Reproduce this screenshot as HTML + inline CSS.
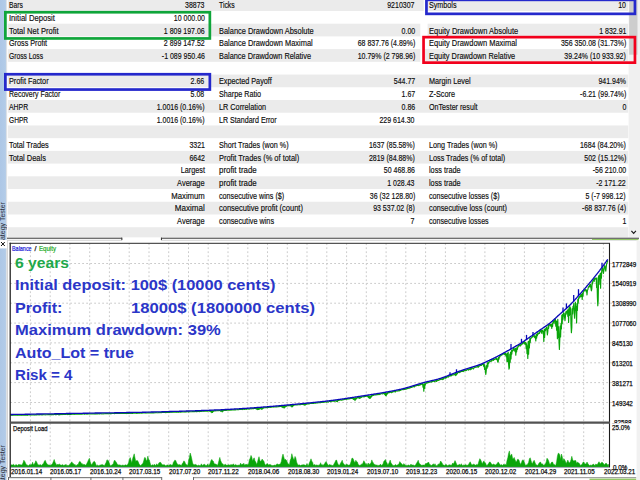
<!DOCTYPE html>
<html><head><meta charset="utf-8"><title>Strategy Tester</title>
<style>
html,body{margin:0;padding:0;background:#fff;}
body{width:640px;height:480px;overflow:hidden;position:relative;font-family:"Liberation Sans",sans-serif;}
#root{position:absolute;left:0;top:0;width:640px;height:480px;overflow:hidden;background:#fff;}
.abs{position:absolute;}
.band{position:absolute;background:#ebebeb;height:12.72px;}
.t{position:absolute;font-size:9.9px;line-height:12px;color:#0c0c0c;-webkit-text-stroke:0.18px #111;white-space:nowrap;transform-origin:0 50%;transform:scaleX(0.755);}
.r{text-align:right;transform-origin:100% 50%;transform:scaleX(0.708);}
.rl{transform:scaleX(0.755);}
.ov{position:absolute;font-weight:bold;font-size:15.5px;line-height:20px;white-space:pre;transform-origin:0 50%;}
.ax{position:absolute;font-size:7.4px;line-height:9px;color:#000;-webkit-text-stroke:0.25px #111;white-space:nowrap;transform-origin:0 50%;transform:scaleX(0.845);}
.dt{position:absolute;font-size:7.4px;line-height:9px;color:#000;-webkit-text-stroke:0.25px #111;white-space:nowrap;top:466.5px;transform-origin:0 50%;transform:scaleX(0.845);}
</style></head><body><div id="root">

<svg class="abs" style="left:0;top:0;" width="640" height="480" viewBox="0 0 640 480">
<rect x="7.90" y="-1.76" width="620.30" height="12.72" fill="#ebebeb"/>
<rect x="7.90" y="23.68" width="620.30" height="12.72" fill="#ebebeb"/>
<rect x="7.90" y="49.12" width="620.30" height="12.72" fill="#ebebeb"/>
<rect x="7.90" y="74.56" width="620.30" height="12.72" fill="#ebebeb"/>
<rect x="7.90" y="100.00" width="620.30" height="12.72" fill="#ebebeb"/>
<rect x="7.90" y="125.44" width="620.30" height="12.72" fill="#ebebeb"/>
<rect x="7.90" y="150.88" width="620.30" height="12.72" fill="#ebebeb"/>
<rect x="7.90" y="176.32" width="620.30" height="12.72" fill="#ebebeb"/>
<rect x="7.90" y="201.76" width="620.30" height="12.72" fill="#ebebeb"/>
<rect x="7.90" y="227.20" width="620.30" height="10.40" fill="#ebebeb"/>
<rect x="420.30" y="23.00" width="7.30" height="13.60" fill="#fff"/>
<rect x="420.30" y="49.00" width="2.30" height="13.20" fill="#fff"/>
<rect x="423.70" y="0.00" width="1.80" height="11.20" fill="#fff"/>
<rect x="628.60" y="0.00" width="11.40" height="237.60" fill="#f0f0f0"/>
<rect x="629.20" y="0.00" width="8.30" height="54.70" fill="#cdcdcd"/>
<path d="M631.4 230.8 L633.65 233.4 L635.9 230.8" fill="none" stroke="#1a1a1a" stroke-width="1.15"/>
</svg>
<div id="table">
<div class="t" style="left:8.9px;top:-0.77px;transform:scaleX(0.684);">Bars</div>
<div class="t r" style="right:435.4px;top:-0.77px;">38873</div>
<div class="t" style="left:219.0px;top:-0.77px;transform:scaleX(0.692);">Ticks</div>
<div class="t r" style="right:225.2px;top:-0.77px;">9210307</div>
<div class="t" style="left:429.1px;top:-0.77px;transform:scaleX(0.726);">Symbols</div>
<div class="t r" style="right:14.0px;top:-0.77px;">10</div>
<div class="t" style="left:8.9px;top:11.93px;transform:scaleX(0.773);">Initial Deposit</div>
<div class="t r" style="right:435.4px;top:11.93px;">10 000.00</div>
<div class="t" style="left:8.9px;top:24.63px;transform:scaleX(0.766);">Total Net Profit</div>
<div class="t r" style="right:435.4px;top:24.63px;">1 809 197.06</div>
<div class="t" style="left:219.0px;top:24.63px;transform:scaleX(0.753);">Balance Drawdown Absolute</div>
<div class="t r" style="right:225.2px;top:24.63px;">0.00</div>
<div class="t" style="left:429.1px;top:24.63px;transform:scaleX(0.759);">Equity Drawdown Absolute</div>
<div class="t r" style="right:14.0px;top:24.63px;">1 832.91</div>
<div class="t" style="left:8.9px;top:37.33px;transform:scaleX(0.731);">Gross Profit</div>
<div class="t r" style="right:435.4px;top:37.33px;">2 899 147.52</div>
<div class="t" style="left:219.0px;top:37.33px;transform:scaleX(0.752);">Balance Drawdown Maximal</div>
<div class="t r" style="right:225.2px;top:37.33px;">68 837.76 (4.89%)</div>
<div class="t" style="left:429.1px;top:37.33px;transform:scaleX(0.756);">Equity Drawdown Maximal</div>
<div class="t r" style="right:14.0px;top:37.33px;">356 350.08 (31.73%)</div>
<div class="t" style="left:8.9px;top:50.03px;transform:scaleX(0.683);">Gross Loss</div>
<div class="t r" style="right:435.4px;top:50.03px;">-1 089 950.46</div>
<div class="t" style="left:219.0px;top:50.03px;transform:scaleX(0.745);">Balance Drawdown Relative</div>
<div class="t r" style="right:225.2px;top:50.03px;">10.79% (2 798.96)</div>
<div class="t" style="left:429.1px;top:50.03px;transform:scaleX(0.748);">Equity Drawdown Relative</div>
<div class="t r" style="right:14.0px;top:50.03px;">39.24% (10 933.92)</div>
<div class="t" style="left:8.9px;top:75.43px;transform:scaleX(0.736);">Profit Factor</div>
<div class="t r" style="right:435.4px;top:75.43px;">2.66</div>
<div class="t" style="left:219.0px;top:75.43px;transform:scaleX(0.735);">Expected Payoff</div>
<div class="t r" style="right:225.2px;top:75.43px;">544.77</div>
<div class="t" style="left:429.1px;top:75.43px;transform:scaleX(0.737);">Margin Level</div>
<div class="t r" style="right:14.0px;top:75.43px;">941.94%</div>
<div class="t" style="left:8.9px;top:88.13px;transform:scaleX(0.707);">Recovery Factor</div>
<div class="t r" style="right:435.4px;top:88.13px;">5.08</div>
<div class="t" style="left:219.0px;top:88.13px;transform:scaleX(0.729);">Sharpe Ratio</div>
<div class="t r" style="right:225.2px;top:88.13px;">1.67</div>
<div class="t" style="left:429.1px;top:88.13px;transform:scaleX(0.740);">Z-Score</div>
<div class="t r" style="right:14.0px;top:88.13px;">-6.21 (99.74%)</div>
<div class="t" style="left:8.9px;top:100.83px;transform:scaleX(0.696);">AHPR</div>
<div class="t r" style="right:435.4px;top:100.83px;">1.0016 (0.16%)</div>
<div class="t" style="left:219.0px;top:100.83px;transform:scaleX(0.738);">LR Correlation</div>
<div class="t r" style="right:225.2px;top:100.83px;">0.86</div>
<div class="t" style="left:429.1px;top:100.83px;transform:scaleX(0.724);">OnTester result</div>
<div class="t r" style="right:14.0px;top:100.83px;">0</div>
<div class="t" style="left:8.9px;top:113.53px;transform:scaleX(0.669);">GHPR</div>
<div class="t r" style="right:435.4px;top:113.53px;">1.0016 (0.16%)</div>
<div class="t" style="left:219.0px;top:113.53px;transform:scaleX(0.720);">LR Standard Error</div>
<div class="t r" style="right:225.2px;top:113.53px;">229 614.30</div>
<div class="t" style="left:8.9px;top:138.93px;transform:scaleX(0.738);">Total Trades</div>
<div class="t r" style="right:435.4px;top:138.93px;">3321</div>
<div class="t" style="left:219.0px;top:138.93px;transform:scaleX(0.728);">Short Trades (won %)</div>
<div class="t r" style="right:225.2px;top:138.93px;">1637 (85.58%)</div>
<div class="t" style="left:429.1px;top:138.93px;transform:scaleX(0.730);">Long Trades (won %)</div>
<div class="t r" style="right:14.0px;top:138.93px;">1684 (84.20%)</div>
<div class="t" style="left:8.9px;top:151.63px;transform:scaleX(0.755);">Total Deals</div>
<div class="t r" style="right:435.4px;top:151.63px;">6642</div>
<div class="t" style="left:219.0px;top:151.63px;transform:scaleX(0.753);">Profit Trades (% of total)</div>
<div class="t r" style="right:225.2px;top:151.63px;">2819 (84.88%)</div>
<div class="t" style="left:429.1px;top:151.63px;transform:scaleX(0.731);">Loss Trades (% of total)</div>
<div class="t r" style="right:14.0px;top:151.63px;">502 (15.12%)</div>
<div class="t r" style="right:435.1px;top:164.33px;transform:scaleX(0.734);">Largest</div>
<div class="t" style="left:219.0px;top:164.33px;transform:scaleX(0.798);">profit trade</div>
<div class="t r" style="right:225.2px;top:164.33px;">50 468.86</div>
<div class="t" style="left:429.1px;top:164.33px;transform:scaleX(0.740);">loss trade</div>
<div class="t r" style="right:14.0px;top:164.33px;">-56 210.00</div>
<div class="t r" style="right:435.1px;top:177.03px;transform:scaleX(0.751);">Average</div>
<div class="t" style="left:219.0px;top:177.03px;transform:scaleX(0.798);">profit trade</div>
<div class="t r" style="right:225.2px;top:177.03px;">1 028.43</div>
<div class="t" style="left:429.1px;top:177.03px;transform:scaleX(0.740);">loss trade</div>
<div class="t r" style="right:14.0px;top:177.03px;">-2 171.22</div>
<div class="t r" style="right:435.1px;top:189.73px;transform:scaleX(0.783);">Maximum</div>
<div class="t" style="left:219.0px;top:189.73px;transform:scaleX(0.729);">consecutive wins ($)</div>
<div class="t r" style="right:225.2px;top:189.73px;">36 (32 128.80)</div>
<div class="t" style="left:429.1px;top:189.73px;transform:scaleX(0.722);">consecutive losses ($)</div>
<div class="t r" style="right:14.0px;top:189.73px;">5 (-7 998.12)</div>
<div class="t r" style="right:435.1px;top:202.43px;transform:scaleX(0.816);">Maximal</div>
<div class="t" style="left:219.0px;top:202.43px;transform:scaleX(0.761);">consecutive profit (count)</div>
<div class="t r" style="right:225.2px;top:202.43px;">93 537.02 (8)</div>
<div class="t" style="left:429.1px;top:202.43px;transform:scaleX(0.736);">consecutive loss (count)</div>
<div class="t r" style="right:14.0px;top:202.43px;">-68 837.76 (4)</div>
<div class="t r" style="right:435.1px;top:215.13px;transform:scaleX(0.751);">Average</div>
<div class="t" style="left:219.0px;top:215.13px;transform:scaleX(0.737);">consecutive wins</div>
<div class="t r" style="right:225.2px;top:215.13px;">7</div>
<div class="t" style="left:429.1px;top:215.13px;transform:scaleX(0.720);">consecutive losses</div>
<div class="t r" style="right:14.0px;top:215.13px;">1</div>
</div>
<svg class="abs" style="left:0;top:0;" width="640" height="480" viewBox="0 0 640 480">
<defs><linearGradient id="sbg" x1="0" x2="1" y1="0" y2="0"><stop offset="0" stop-color="#adc7e6"/><stop offset="0.8" stop-color="#b2cbe8"/><stop offset="1" stop-color="#bdd0e6"/></linearGradient></defs>
<rect x="0" y="0" width="6.3" height="239.9" fill="url(#sbg)"/>
<rect x="0" y="248.4" width="6.3" height="232" fill="url(#sbg)"/>
<rect x="6.30" y="0.00" width="0.80" height="239.90" fill="#d6dade"/>
<rect x="6.30" y="248.40" width="0.80" height="231.60" fill="#d6dade"/>
<path d="M1.0 242.0 L4.8 246.0 M4.8 242.0 L1.0 246.0" stroke="#111" stroke-width="1.0" fill="none"/>
</svg>
<div class="abs" style="left:0;top:0.0px;width:7px;height:239.8px;overflow:hidden;"><div style="position:absolute;left:0.2px;top:249.2px;width:0;height:0;"><div style="position:absolute;left:0;top:0;transform-origin:0 0;transform:rotate(-90deg);font-size:7px;line-height:6px;height:6px;color:#2a2f3a;white-space:nowrap;">Strategy Tester</div></div></div>
<div class="abs" style="left:0;top:248.4px;width:7px;height:231.6px;overflow:hidden;"><div style="position:absolute;left:0.2px;top:243.3px;width:0;height:0;"><div style="position:absolute;left:0;top:0;transform-origin:0 0;transform:rotate(-90deg);font-size:7px;line-height:6px;height:6px;color:#2a2f3a;white-space:nowrap;">Strategy Tester</div></div></div>
<svg class="abs" style="left:0;top:0;" width="640" height="480" viewBox="0 0 640 480">
<rect x="5.35" y="12.25" width="204.50" height="26.20" fill="none" stroke="#0fa53a" stroke-width="2.70"/>
<rect x="5.35" y="74.25" width="204.50" height="15.30" fill="none" stroke="#2529cc" stroke-width="2.70"/>
<rect x="426.45" y="-0.15" width="208.50" height="14.00" fill="none" stroke="#2529cc" stroke-width="2.70"/>
<rect x="423.55" y="37.15" width="211.40" height="25.50" fill="none" stroke="#f2001c" stroke-width="2.70"/>
<rect x="7.00" y="237.60" width="633.00" height="3.10" fill="#fff"/>
<rect x="7.00" y="237.60" width="115.00" height="1.40" fill="#707070"/>
<rect x="7.00" y="239.80" width="115.00" height="0.80" fill="#c6c6c6"/>
<rect x="161.30" y="237.60" width="477.70" height="1.40" fill="#707070"/>
<rect x="161.30" y="239.80" width="430.70" height="0.80" fill="#c6c6c6"/>
<rect x="121.30" y="237.60" width="1.10" height="2.50" fill="#3a3a3a"/>
<rect x="160.90" y="237.60" width="1.10" height="2.50" fill="#3a3a3a"/>
<rect x="592.00" y="239.00" width="46.50" height="1.20" fill="#93c765"/>
<rect x="592.00" y="240.40" width="44.50" height="0.60" fill="#dcd8e4"/>
</svg>
<svg class="abs" style="left:0;top:0;" width="640" height="480" viewBox="0 0 640 480">
<rect x="636.6" y="240.6" width="3.4" height="240" fill="#f1f1f1"/>
<line x1="30.4" y1="243.3" x2="30.4" y2="467.0" stroke="#cbcbcb" stroke-width="1" stroke-dasharray="1.8,2.2"/>
<line x1="50.2" y1="243.3" x2="50.2" y2="467.0" stroke="#cbcbcb" stroke-width="1" stroke-dasharray="1.8,2.2"/>
<line x1="69.9" y1="243.3" x2="69.9" y2="467.0" stroke="#cbcbcb" stroke-width="1" stroke-dasharray="1.8,2.2"/>
<line x1="89.7" y1="243.3" x2="89.7" y2="467.0" stroke="#cbcbcb" stroke-width="1" stroke-dasharray="1.8,2.2"/>
<line x1="109.4" y1="243.3" x2="109.4" y2="467.0" stroke="#cbcbcb" stroke-width="1" stroke-dasharray="1.8,2.2"/>
<line x1="129.2" y1="243.3" x2="129.2" y2="467.0" stroke="#cbcbcb" stroke-width="1" stroke-dasharray="1.8,2.2"/>
<line x1="149.0" y1="243.3" x2="149.0" y2="467.0" stroke="#cbcbcb" stroke-width="1" stroke-dasharray="1.8,2.2"/>
<line x1="168.7" y1="243.3" x2="168.7" y2="467.0" stroke="#cbcbcb" stroke-width="1" stroke-dasharray="1.8,2.2"/>
<line x1="188.5" y1="243.3" x2="188.5" y2="467.0" stroke="#cbcbcb" stroke-width="1" stroke-dasharray="1.8,2.2"/>
<line x1="208.2" y1="243.3" x2="208.2" y2="467.0" stroke="#cbcbcb" stroke-width="1" stroke-dasharray="1.8,2.2"/>
<line x1="228.0" y1="243.3" x2="228.0" y2="467.0" stroke="#cbcbcb" stroke-width="1" stroke-dasharray="1.8,2.2"/>
<line x1="247.8" y1="243.3" x2="247.8" y2="467.0" stroke="#cbcbcb" stroke-width="1" stroke-dasharray="1.8,2.2"/>
<line x1="267.5" y1="243.3" x2="267.5" y2="467.0" stroke="#cbcbcb" stroke-width="1" stroke-dasharray="1.8,2.2"/>
<line x1="287.3" y1="243.3" x2="287.3" y2="467.0" stroke="#cbcbcb" stroke-width="1" stroke-dasharray="1.8,2.2"/>
<line x1="307.0" y1="243.3" x2="307.0" y2="467.0" stroke="#cbcbcb" stroke-width="1" stroke-dasharray="1.8,2.2"/>
<line x1="326.8" y1="243.3" x2="326.8" y2="467.0" stroke="#cbcbcb" stroke-width="1" stroke-dasharray="1.8,2.2"/>
<line x1="346.6" y1="243.3" x2="346.6" y2="467.0" stroke="#cbcbcb" stroke-width="1" stroke-dasharray="1.8,2.2"/>
<line x1="366.3" y1="243.3" x2="366.3" y2="467.0" stroke="#cbcbcb" stroke-width="1" stroke-dasharray="1.8,2.2"/>
<line x1="386.1" y1="243.3" x2="386.1" y2="467.0" stroke="#cbcbcb" stroke-width="1" stroke-dasharray="1.8,2.2"/>
<line x1="405.8" y1="243.3" x2="405.8" y2="467.0" stroke="#cbcbcb" stroke-width="1" stroke-dasharray="1.8,2.2"/>
<line x1="425.6" y1="243.3" x2="425.6" y2="467.0" stroke="#cbcbcb" stroke-width="1" stroke-dasharray="1.8,2.2"/>
<line x1="445.4" y1="243.3" x2="445.4" y2="467.0" stroke="#cbcbcb" stroke-width="1" stroke-dasharray="1.8,2.2"/>
<line x1="465.1" y1="243.3" x2="465.1" y2="467.0" stroke="#cbcbcb" stroke-width="1" stroke-dasharray="1.8,2.2"/>
<line x1="484.9" y1="243.3" x2="484.9" y2="467.0" stroke="#cbcbcb" stroke-width="1" stroke-dasharray="1.8,2.2"/>
<line x1="504.6" y1="243.3" x2="504.6" y2="467.0" stroke="#cbcbcb" stroke-width="1" stroke-dasharray="1.8,2.2"/>
<line x1="524.4" y1="243.3" x2="524.4" y2="467.0" stroke="#cbcbcb" stroke-width="1" stroke-dasharray="1.8,2.2"/>
<line x1="544.2" y1="243.3" x2="544.2" y2="467.0" stroke="#cbcbcb" stroke-width="1" stroke-dasharray="1.8,2.2"/>
<line x1="563.9" y1="243.3" x2="563.9" y2="467.0" stroke="#cbcbcb" stroke-width="1" stroke-dasharray="1.8,2.2"/>
<line x1="583.7" y1="243.3" x2="583.7" y2="467.0" stroke="#cbcbcb" stroke-width="1" stroke-dasharray="1.8,2.2"/>
<line x1="603.4" y1="243.3" x2="603.4" y2="467.0" stroke="#cbcbcb" stroke-width="1" stroke-dasharray="1.8,2.2"/>
<line x1="10.2" y1="263.5" x2="612.0" y2="263.5" stroke="#cbcbcb" stroke-width="1" stroke-dasharray="1.8,2.2"/>
<line x1="10.2" y1="283.4" x2="612.0" y2="283.4" stroke="#cbcbcb" stroke-width="1" stroke-dasharray="1.8,2.2"/>
<line x1="10.2" y1="303.2" x2="612.0" y2="303.2" stroke="#cbcbcb" stroke-width="1" stroke-dasharray="1.8,2.2"/>
<line x1="10.2" y1="323.1" x2="612.0" y2="323.1" stroke="#cbcbcb" stroke-width="1" stroke-dasharray="1.8,2.2"/>
<line x1="10.2" y1="342.9" x2="612.0" y2="342.9" stroke="#cbcbcb" stroke-width="1" stroke-dasharray="1.8,2.2"/>
<line x1="10.2" y1="362.8" x2="612.0" y2="362.8" stroke="#cbcbcb" stroke-width="1" stroke-dasharray="1.8,2.2"/>
<line x1="10.2" y1="382.6" x2="612.0" y2="382.6" stroke="#cbcbcb" stroke-width="1" stroke-dasharray="1.8,2.2"/>
<line x1="10.2" y1="402.5" x2="612.0" y2="402.5" stroke="#cbcbcb" stroke-width="1" stroke-dasharray="1.8,2.2"/>
<polyline fill="none" stroke="#0aa50a" stroke-width="1.15" stroke-linejoin="round" points="10.2,415.2 10.6,415.3 11.0,415.2 11.4,415.2 11.8,415.3 12.2,415.2 12.6,415.3 13.0,415.2 13.4,415.3 13.8,415.2 14.2,415.2 14.6,415.1 15.0,415.2 15.4,415.2 15.8,415.2 16.2,415.2 16.6,415.2 17.0,415.2 17.4,415.2 17.8,415.3 18.2,415.1 18.6,415.2 19.0,415.2 19.4,415.1 19.8,415.2 20.2,415.2 20.6,415.1 21.0,415.2 21.4,415.3 21.8,415.0 22.2,415.1 22.6,415.0 23.0,415.1 23.4,415.1 23.8,415.0 24.2,415.1 24.6,415.0 25.0,415.1 25.4,415.1 25.8,415.2 26.2,415.1 26.6,415.0 27.0,415.2 27.4,415.3 27.8,414.9 28.2,415.0 28.6,415.0 29.0,415.0 29.4,415.0 29.8,414.9 30.2,414.9 30.6,414.9 31.0,415.1 31.4,414.9 31.8,414.9 32.2,414.9 32.6,415.0 33.0,415.0 33.4,414.9 33.8,414.9 34.2,415.1 34.6,414.9 35.0,414.9 35.4,415.0 35.8,414.8 36.2,414.9 36.6,414.9 37.0,415.0 37.4,414.8 37.8,414.7 38.2,414.8 38.6,414.8 39.0,414.7 39.4,414.9 39.8,414.8 40.2,414.7 40.6,414.8 41.0,414.7 41.4,414.8 41.8,414.8 42.2,414.9 42.6,414.7 43.0,414.8 43.4,414.7 43.8,414.6 44.2,414.7 44.6,414.8 45.0,414.7 45.4,414.8 45.8,414.8 46.2,414.7 46.6,414.7 47.0,414.7 47.4,414.7 47.8,414.6 48.2,414.6 48.6,414.6 49.0,414.6 49.4,414.6 49.8,414.6 50.2,414.6 50.6,414.5 51.0,414.6 51.4,414.6 51.8,414.8 52.2,414.5 52.6,414.5 53.0,414.6 53.4,414.7 53.8,414.6 54.2,414.5 54.6,414.5 55.0,414.5 55.4,414.7 55.8,414.6 56.2,414.5 56.6,414.6 57.0,414.4 57.4,414.4 57.8,414.5 58.2,414.6 58.6,414.5 59.0,414.8 59.4,414.6 59.8,414.8 60.2,414.6 60.6,414.5 61.0,414.3 61.4,414.6 61.8,414.4 62.2,414.6 62.6,414.4 63.0,414.4 63.4,414.4 63.8,414.3 64.2,414.5 64.6,414.5 65.0,414.3 65.4,414.4 65.8,414.5 66.2,414.3 66.6,414.2 67.0,414.3 67.4,414.6 67.8,414.4 68.2,414.3 68.6,414.3 69.0,414.3 69.4,414.4 69.8,414.3 70.2,414.3 70.6,414.4 71.0,414.4 71.4,414.2 71.8,414.2 72.2,414.3 72.6,414.1 73.0,414.1 73.4,414.3 73.8,414.1 74.2,414.4 74.6,414.1 75.0,414.3 75.4,414.2 75.8,414.1 76.2,414.2 76.6,414.1 77.0,414.2 77.4,414.1 77.8,414.2 78.2,414.0 78.6,414.2 79.0,414.2 79.4,414.2 79.8,414.1 80.2,414.1 80.6,414.2 81.0,414.1 81.4,414.2 81.8,414.1 82.2,414.1 82.6,414.0 83.0,414.0 83.4,413.9 83.8,414.0 84.2,414.0 84.6,414.2 85.0,413.9 85.4,414.0 85.8,414.0 86.2,413.9 86.6,414.1 87.0,414.0 87.4,414.0 87.8,414.1 88.2,413.9 88.6,414.0 89.0,414.0 89.4,413.8 89.8,413.9 90.2,413.8 90.6,414.0 91.0,414.0 91.4,413.9 91.8,413.9 92.2,413.9 92.6,413.9 93.0,413.9 93.4,414.0 93.8,413.8 94.2,413.9 94.6,413.8 95.0,414.1 95.4,413.8 95.8,413.8 96.2,414.0 96.6,413.8 97.0,413.8 97.4,414.0 97.8,413.8 98.2,413.7 98.6,413.8 99.0,413.8 99.4,413.8 99.8,413.8 100.2,413.7 100.6,413.8 101.0,413.7 101.4,413.7 101.8,413.9 102.2,413.8 102.6,413.8 103.0,413.7 103.4,413.7 103.8,413.9 104.2,413.8 104.6,413.7 105.0,413.6 105.4,413.6 105.8,413.7 106.2,413.6 106.6,413.6 107.0,413.7 107.4,413.6 107.8,413.6 108.2,413.7 108.6,413.8 109.0,413.6 109.4,413.7 109.8,413.6 110.2,413.8 110.6,413.6 111.0,413.7 111.4,413.6 111.8,413.5 112.2,413.5 112.6,413.5 113.0,413.5 113.4,413.5 113.8,413.5 114.2,413.5 114.6,413.6 115.0,413.5 115.4,413.5 115.8,413.4 116.2,413.5 116.6,413.5 117.0,413.4 117.4,413.4 117.8,413.5 118.2,413.4 118.6,413.5 119.0,413.5 119.4,413.4 119.8,413.4 120.2,413.4 120.6,413.3 121.0,413.4 121.4,413.4 121.8,413.5 122.2,413.4 122.6,413.5 123.0,413.4 123.4,413.3 123.8,413.4 124.2,413.4 124.6,413.5 125.0,413.3 125.4,413.4 125.8,413.4 126.2,413.4 126.6,413.6 127.0,413.4 127.4,413.4 127.8,413.3 128.2,413.4 128.6,413.3 129.0,413.3 129.4,413.3 129.8,413.2 130.2,413.4 130.6,413.3 131.0,413.2 131.4,413.2 131.8,413.4 132.2,413.3 132.6,413.3 133.0,413.3 133.4,413.1 133.8,413.2 134.2,413.1 134.6,413.2 135.0,413.2 135.4,413.2 135.8,413.1 136.2,413.4 136.6,413.2 137.0,413.1 137.4,413.1 137.8,413.4 138.2,413.1 138.6,413.1 139.0,413.1 139.4,413.0 139.8,413.2 140.2,413.0 140.6,413.0 141.0,413.1 141.4,413.1 141.8,413.0 142.2,413.1 142.6,413.0 143.0,413.0 143.4,412.9 143.8,412.9 144.2,413.0 144.6,413.0 145.0,413.0 145.4,412.9 145.8,413.1 146.2,412.9 146.6,413.1 147.0,412.9 147.4,412.9 147.8,412.9 148.2,412.8 148.6,412.8 149.0,413.0 149.4,413.0 149.8,412.8 150.2,412.9 150.6,412.9 151.0,412.8 151.4,413.0 151.8,412.8 152.2,412.8 152.6,413.0 153.0,412.7 153.4,412.8 153.8,412.9 154.2,412.9 154.6,412.8 155.0,412.7 155.4,412.8 155.8,412.6 156.2,412.6 156.6,412.7 157.0,412.7 157.4,412.8 157.8,412.7 158.2,412.7 158.6,412.6 159.0,412.7 159.4,412.7 159.8,412.5 160.2,412.5 160.6,412.6 161.0,412.7 161.4,412.6 161.8,412.5 162.2,412.5 162.6,412.5 163.0,412.4 163.4,412.5 163.8,412.5 164.2,412.4 164.6,412.4 165.0,412.4 165.4,412.4 165.8,412.7 166.2,412.5 166.6,412.3 167.0,412.5 167.4,412.3 167.8,412.3 168.2,412.5 168.6,412.3 169.0,412.3 169.4,412.3 169.8,412.3 170.2,412.2 170.6,412.3 171.0,412.2 171.4,412.2 171.8,412.3 172.2,412.2 172.6,412.2 173.0,412.3 173.4,412.2 173.8,412.2 174.2,412.2 174.6,412.1 175.0,412.1 175.4,412.1 175.8,412.1 176.2,412.1 176.6,412.3 177.0,412.1 177.4,412.2 177.8,412.0 178.2,412.1 178.6,412.3 179.0,412.1 179.4,412.0 179.8,412.0 180.2,412.2 180.6,412.0 181.0,412.1 181.4,412.0 181.8,412.0 182.2,411.9 182.6,411.9 183.0,411.9 183.4,412.0 183.8,412.0 184.2,411.9 184.6,411.8 185.0,412.1 185.4,411.8 185.8,411.8 186.2,411.9 186.6,411.7 187.0,411.8 187.4,411.7 187.8,411.8 188.2,411.8 188.6,411.8 189.0,411.9 189.4,411.9 189.8,411.6 190.2,411.7 190.6,411.7 191.0,411.8 191.4,411.7 191.8,411.7 192.2,411.6 192.6,411.6 193.0,411.6 193.4,411.7 193.8,411.5 194.2,411.6 194.6,411.6 195.0,411.5 195.4,411.5 195.8,411.6 196.2,411.6 196.6,411.5 197.0,411.7 197.4,411.4 197.8,411.5 198.2,411.4 198.6,411.3 199.0,411.6 199.4,411.6 199.8,411.5 200.2,411.4 200.6,411.5 201.0,411.5 201.4,411.4 201.8,411.3 202.2,411.2 202.6,411.2 203.0,411.2 203.4,411.3 203.8,411.2 204.2,411.3 204.6,411.1 205.0,411.1 205.4,411.2 205.8,411.1 206.2,411.2 206.6,411.1 207.0,411.1 207.4,411.2 207.8,411.1 208.2,411.0 208.6,411.0 209.0,411.0 209.4,411.1 209.8,411.0 210.2,411.2 210.6,411.2 211.0,411.9 211.4,411.1 211.8,412.6 212.2,410.9 212.6,412.4 213.0,410.9 213.4,411.4 213.8,410.9 214.2,410.8 214.6,410.8 215.0,410.8 215.4,410.7 215.8,410.9 216.2,410.7 216.6,410.7 217.0,410.7 217.4,410.6 217.8,410.7 218.2,410.7 218.6,410.6 219.0,410.5 219.4,410.5 219.8,410.6 220.2,410.6 220.6,411.2 221.0,410.6 221.4,411.2 221.8,410.4 222.2,411.9 222.6,410.4 223.0,411.1 223.4,410.5 223.8,410.6 224.2,410.3 224.6,410.3 225.0,410.3 225.4,410.4 225.8,410.4 226.2,410.4 226.6,410.2 227.0,410.2 227.4,410.2 227.8,410.1 228.2,410.1 228.6,410.1 229.0,410.2 229.4,410.2 229.8,410.0 230.2,410.1 230.6,410.1 231.0,409.9 231.4,410.0 231.8,410.1 232.2,409.9 232.6,409.8 233.0,409.8 233.4,410.0 233.8,409.8 234.2,409.8 234.6,409.8 235.0,409.9 235.4,409.9 235.8,409.7 236.2,409.7 236.6,409.7 237.0,409.7 237.4,409.6 237.8,409.6 238.2,409.6 238.6,409.7 239.0,409.6 239.4,409.4 239.8,409.5 240.2,409.4 240.6,409.4 241.0,409.4 241.4,409.4 241.8,409.5 242.2,409.4 242.6,409.6 243.0,409.3 243.4,409.2 243.8,409.2 244.2,409.3 244.6,409.3 245.0,409.4 245.4,409.1 245.8,409.1 246.2,409.1 246.6,409.3 247.0,409.0 247.4,409.0 247.8,409.0 248.2,408.9 248.6,409.1 249.0,409.0 249.4,408.8 249.8,409.2 250.2,408.8 250.6,408.7 251.0,408.8 251.4,408.9 251.8,408.6 252.2,408.6 252.6,408.6 253.0,408.6 253.4,408.6 253.8,408.6 254.2,408.5 254.6,408.5 255.0,408.5 255.4,408.4 255.8,408.7 256.2,408.4 256.6,409.1 257.0,408.5 257.4,409.6 257.8,408.5 258.2,409.5 258.6,408.2 259.0,409.4 259.4,408.2 259.8,409.0 260.2,408.1 260.6,408.3 261.0,408.1 261.4,409.2 261.8,408.0 262.2,409.1 262.6,407.8 263.0,408.5 263.4,407.8 263.8,407.9 264.2,407.7 264.6,407.7 265.0,407.8 265.4,407.6 265.8,407.7 266.2,407.6 266.6,407.6 267.0,407.6 267.4,407.6 267.8,407.5 268.2,407.4 268.6,407.3 269.0,407.4 269.4,407.3 269.8,407.2 270.2,407.3 270.6,407.2 271.0,407.4 271.4,407.1 271.8,407.2 272.2,407.0 272.6,407.0 273.0,407.0 273.4,407.1 273.8,406.9 274.2,407.0 274.6,406.9 275.0,407.0 275.4,406.9 275.8,406.8 276.2,406.9 276.6,406.8 277.0,406.8 277.4,406.8 277.8,406.7 278.2,406.6 278.6,406.7 279.0,406.6 279.4,406.6 279.8,406.4 280.2,406.4 280.6,406.5 281.0,406.5 281.4,406.6 281.8,406.5 282.2,407.1 282.6,406.3 283.0,407.7 283.4,406.5 283.8,407.7 284.2,406.0 284.6,407.9 285.0,405.9 285.4,406.8 285.8,406.0 286.2,406.3 286.6,405.8 287.0,405.8 287.4,405.8 287.8,405.7 288.2,405.8 288.6,405.6 289.0,405.6 289.4,405.6 289.8,405.7 290.2,405.6 290.6,405.6 291.0,406.2 291.4,405.4 291.8,406.9 292.2,405.3 292.6,406.6 293.0,405.3 293.4,405.6 293.8,405.2 294.2,405.2 294.6,405.0 295.0,405.0 295.4,405.0 295.8,405.0 296.2,405.0 296.6,404.9 297.0,404.9 297.4,404.9 297.8,404.8 298.2,404.7 298.6,404.7 299.0,404.8 299.4,404.6 299.8,404.6 300.2,404.5 300.6,404.6 301.0,404.5 301.4,404.5 301.8,404.3 302.2,404.3 302.6,404.4 303.0,404.5 303.4,404.2 303.8,404.8 304.2,404.4 304.6,405.1 305.0,404.3 305.4,404.9 305.8,404.1 306.2,404.5 306.6,404.0 307.0,403.9 307.4,403.9 307.8,403.8 308.2,403.8 308.6,403.7 309.0,404.0 309.4,403.8 309.8,403.6 310.2,403.5 310.6,403.5 311.0,403.5 311.4,403.4 311.8,403.5 312.2,403.4 312.6,403.4 313.0,403.3 313.4,403.4 313.8,403.2 314.2,403.3 314.6,403.2 315.0,403.2 315.4,403.0 315.8,403.2 316.2,402.9 316.6,403.0 317.0,402.8 317.4,402.8 317.8,403.0 318.2,402.8 318.6,402.7 319.0,402.7 319.4,402.6 319.8,402.6 320.2,402.6 320.6,402.6 321.0,402.5 321.4,402.4 321.8,402.3 322.2,402.3 322.6,402.3 323.0,402.2 323.4,402.4 323.8,402.1 324.2,402.0 324.6,402.2 325.0,402.0 325.4,402.0 325.8,401.9 326.2,402.2 326.6,402.2 327.0,401.8 327.4,402.0 327.8,401.8 328.2,402.1 328.6,402.0 329.0,401.5 329.4,401.5 329.8,401.4 330.2,401.4 330.6,401.7 331.0,401.4 331.4,401.2 331.8,401.1 332.2,401.2 332.6,401.1 333.0,401.1 333.4,401.0 333.8,401.0 334.2,401.3 334.6,400.8 335.0,400.9 335.4,400.7 335.8,401.1 336.2,400.9 336.6,401.3 337.0,400.7 337.4,401.7 337.8,400.5 338.2,400.6 338.6,400.4 339.0,400.3 339.4,400.2 339.8,400.3 340.2,400.0 340.6,399.9 341.0,400.1 341.4,400.0 341.8,400.1 342.2,400.1 342.6,399.8 343.0,399.6 343.4,399.8 343.8,399.7 344.2,399.4 344.6,399.4 345.0,399.4 345.4,399.3 345.8,399.2 346.2,399.3 346.6,399.3 347.0,399.2 347.4,399.0 347.8,399.0 348.2,398.9 348.6,398.8 349.0,399.0 349.4,398.6 349.8,398.6 350.2,398.6 350.6,398.5 351.0,398.5 351.4,398.5 351.8,398.4 352.2,398.3 352.6,398.5 353.0,398.5 353.4,399.4 353.8,398.2 354.2,399.4 354.6,398.3 355.0,400.7 355.4,397.9 355.8,399.4 356.2,398.0 356.6,398.7 357.0,397.5 357.4,397.8 357.8,397.5 358.2,397.4 358.6,397.3 359.0,398.3 359.4,397.1 359.8,398.4 360.2,397.4 360.6,397.9 361.0,397.2 361.4,397.5 361.8,397.0 362.2,396.7 362.6,396.7 363.0,396.8 363.4,396.8 363.8,396.6 364.2,396.8 364.6,396.3 365.0,396.4 365.4,396.4 365.8,396.2 366.2,396.1 366.6,396.3 367.0,396.1 367.4,395.9 367.8,396.8 368.2,396.0 368.6,397.7 369.0,395.8 369.4,398.3 369.8,396.3 370.2,398.4 370.6,396.2 371.0,397.4 371.4,395.7 371.8,396.3 372.2,395.2 372.6,395.6 373.0,395.3 373.4,395.4 373.8,395.3 374.2,394.9 374.6,394.7 375.0,394.8 375.4,395.0 375.8,394.7 376.2,394.9 376.6,394.8 377.0,394.5 377.4,394.6 377.8,394.6 378.2,394.4 378.6,394.6 379.0,394.6 379.4,394.2 379.8,394.5 380.2,394.2 380.6,393.9 381.0,393.8 381.4,393.7 381.8,393.6 382.2,393.8 382.6,393.9 383.0,393.7 383.4,393.7 383.8,393.3 384.2,393.3 384.6,394.3 385.0,393.3 385.4,395.5 385.8,393.1 386.2,395.8 386.6,393.5 387.0,394.4 387.4,392.6 387.8,393.3 388.2,392.7 388.6,392.5 389.0,392.9 389.4,392.3 389.8,392.3 390.2,392.3 390.6,392.0 391.0,392.0 391.4,392.7 391.8,392.1 392.2,391.7 392.6,392.2 393.0,391.6 393.4,391.6 393.8,391.7 394.2,391.7 394.6,391.7 395.0,391.2 395.4,391.9 395.8,391.0 396.2,391.1 396.6,390.9 397.0,391.1 397.4,391.0 397.8,390.9 398.2,391.0 398.6,390.7 399.0,390.5 399.4,390.8 399.8,390.4 400.2,390.3 400.6,390.3 401.0,390.1 401.4,389.9 401.8,389.8 402.2,389.7 402.6,389.5 403.0,389.5 403.4,389.6 403.8,389.5 404.2,389.3 404.6,389.5 405.0,389.4 405.4,388.8 405.8,389.1 406.2,389.1 406.6,388.6 407.0,388.3 407.4,388.7 407.8,388.3 408.2,388.2 408.6,388.3 409.0,388.3 409.4,387.9 409.8,388.0 410.2,387.6 410.6,387.6 411.0,387.2 411.4,387.5 411.8,387.2 412.2,387.1 412.6,386.9 413.0,386.7 413.4,386.5 413.8,386.6 414.2,386.4 414.6,386.8 415.0,386.0 415.4,386.0 415.8,385.6 416.2,385.9 416.6,385.6 417.0,385.3 417.4,385.3 417.8,385.3 418.2,385.6 418.6,384.9 419.0,385.5 419.4,385.2 419.8,384.7 420.2,384.5 420.6,384.9 421.0,384.1 421.4,384.0 421.8,384.3 422.2,384.0 422.6,383.7 423.0,387.2 423.4,384.9 423.8,391.1 424.2,383.6 424.6,388.4 425.0,384.2 425.4,384.9 425.8,383.0 426.2,382.7 426.6,383.2 427.0,382.5 427.4,383.0 427.8,382.7 428.2,382.7 428.6,382.4 429.0,382.4 429.4,382.1 429.8,382.4 430.2,382.1 430.6,381.9 431.0,381.7 431.4,382.1 431.8,381.6 432.2,381.5 432.6,381.6 433.0,381.3 433.4,381.3 433.8,381.2 434.2,381.3 434.6,381.7 435.0,380.9 435.4,381.1 435.8,380.5 436.2,380.8 436.6,381.5 437.0,380.2 437.4,380.6 437.8,380.0 438.2,380.2 438.6,380.4 439.0,380.1 439.4,379.6 439.8,379.8 440.2,379.5 440.6,379.1 441.0,379.5 441.4,379.3 441.8,378.7 442.2,379.6 442.6,378.8 443.0,379.5 443.4,378.1 443.8,378.8 444.2,377.8 444.6,377.8 445.0,377.9 445.4,377.4 445.8,378.4 446.2,377.2 446.6,377.4 447.0,376.8 447.4,376.8 447.8,376.6 448.2,377.2 448.6,376.5 449.0,376.4 449.4,376.1 449.8,375.8 450.2,375.9 450.6,375.4 451.0,375.8 451.4,375.8 451.8,375.1 452.2,375.2 452.6,374.7 453.0,375.0 453.4,374.9 453.8,374.8 454.2,374.2 454.6,374.3 455.0,375.1 455.4,373.4 455.8,375.6 456.2,373.6 456.6,374.7 457.0,373.4 457.4,373.7 457.8,372.7 458.2,372.4 458.6,372.5 459.0,372.1 459.4,371.9 459.8,372.6 460.2,371.9 460.6,371.5 461.0,371.6 461.4,371.5 461.8,371.4 462.2,371.0 462.6,371.4 463.0,371.4 463.4,371.6 463.8,370.5 464.2,370.7 464.6,370.8 465.0,370.6 465.4,370.1 465.8,370.7 466.2,370.5 466.6,370.2 467.0,369.6 467.4,369.6 467.8,369.4 468.2,369.8 468.6,370.1 469.0,369.3 469.4,369.5 469.8,368.9 470.2,369.8 470.6,368.4 471.0,369.4 471.4,368.4 471.8,368.8 472.2,368.0 472.6,368.0 473.0,368.1 473.4,368.9 473.8,368.1 474.2,368.0 474.6,367.5 475.0,367.0 475.4,366.9 475.8,367.4 476.2,367.2 476.6,366.9 477.0,366.5 477.4,366.9 477.8,366.1 478.2,367.3 478.6,365.8 479.0,366.6 479.4,365.6 479.8,365.7 480.2,365.6 480.6,365.4 481.0,365.3 481.4,365.5 481.8,364.6 482.2,364.4 482.6,364.6 483.0,364.8 483.4,364.2 483.8,366.7 484.2,364.1 484.6,369.5 485.0,365.9 485.4,371.2 485.8,374.5 486.2,371.3 486.6,365.5 487.0,368.4 487.4,362.8 487.8,366.9 488.2,362.2 488.6,363.5 489.0,362.3 489.4,361.8 489.8,361.5 490.2,361.5 490.6,361.1 491.0,360.5 491.4,361.1 491.8,361.1 492.2,360.0 492.6,359.8 493.0,359.6 493.4,360.4 493.8,359.2 494.2,359.7 494.6,359.1 495.0,359.3 495.4,359.2 495.8,358.4 496.2,357.9 496.6,359.7 497.0,358.4 497.4,360.1 497.8,362.2 498.2,361.9 498.6,357.4 499.0,359.2 499.4,356.7 499.8,357.0 500.2,355.7 500.6,355.7 501.0,355.6 501.4,355.0 501.8,354.7 502.2,354.7 502.6,354.7 503.0,354.4 503.4,353.9 503.8,353.9 504.2,353.7 504.6,354.5 505.0,353.1 505.4,355.1 505.8,353.6 506.2,356.7 506.6,354.2 507.0,361.6 507.4,353.3 507.8,361.4 508.2,352.1 508.6,364.3 509.0,369.1 509.4,367.9 509.8,354.1 510.2,362.3 510.6,352.3 511.0,359.0 511.4,350.6 511.8,354.2 512.2,350.0 512.6,351.1 513.0,350.6 513.4,348.5 513.8,348.4 514.2,350.2 514.6,349.0 515.0,351.7 515.4,348.3 515.8,355.2 516.2,348.8 516.6,351.9 517.0,347.2 517.4,349.5 517.8,346.7 518.2,346.8 518.6,345.4 519.0,345.8 519.4,345.7 519.8,344.8 520.2,346.2 520.6,344.6 521.0,345.2 521.4,344.3 521.8,343.8 522.2,344.1 522.6,343.4 523.0,342.7 523.4,342.9 523.8,342.0 524.2,344.0 524.6,341.6 525.0,342.5 525.4,344.5 525.8,342.6 526.2,348.7 526.6,343.9 527.0,353.6 527.4,346.1 527.8,358.5 528.2,341.5 528.6,354.2 529.0,341.0 529.4,348.0 529.8,338.5 530.2,342.7 530.6,338.3 531.0,338.3 531.4,338.1 531.8,337.2 532.2,337.3 532.6,336.2 533.0,335.7 533.4,336.2 533.8,336.0 534.2,337.1 534.6,335.6 535.0,337.9 535.4,336.5 535.8,341.0 536.2,334.1 536.6,338.2 537.0,334.5 537.4,335.6 537.8,332.5 538.2,334.1 538.6,333.7 539.0,333.2 539.4,333.4 539.8,331.4 540.2,331.6 540.6,330.9 541.0,330.2 541.4,333.3 541.8,330.2 542.2,330.3 542.6,330.2 543.0,333.6 543.4,331.7 543.8,341.4 544.2,329.5 544.6,337.4 545.0,329.2 545.4,330.8 545.8,328.3 546.2,328.3 546.6,327.1 547.0,331.3 547.4,335.0 547.8,331.8 548.2,325.2 548.6,328.4 549.0,324.9 549.4,324.7 549.8,324.3 550.2,325.7 550.6,324.3 551.0,326.3 551.4,324.5 551.8,328.5 552.2,323.6 552.6,326.5 553.0,321.4 553.4,323.1 553.8,320.8 554.2,320.8 554.6,320.4 555.0,323.7 555.4,319.3 555.8,326.2 556.2,321.1 556.6,330.1 557.0,321.2 557.4,338.7 557.8,319.3 558.2,337.4 558.6,326.9 559.0,341.2 559.4,349.5 559.8,339.1 560.2,326.0 560.6,336.9 561.0,323.4 561.4,329.0 561.8,315.2 562.2,323.8 562.6,314.6 563.0,319.3 563.4,312.7 563.8,315.9 564.2,313.3 564.6,317.4 565.0,320.6 565.4,316.6 565.8,311.9 566.2,314.1 566.6,311.3 567.0,311.8 567.4,310.1 567.8,316.3 568.2,309.7 568.6,322.4 569.0,307.9 569.4,315.4 569.8,306.3 570.2,314.4 570.6,307.8 571.0,324.6 571.4,332.6 571.8,327.8 572.2,308.9 572.6,313.9 573.0,306.3 573.4,307.4 573.8,303.2 574.2,312.9 574.6,318.1 575.0,312.3 575.4,302.2 575.8,310.1 576.2,306.6 576.6,322.9 577.0,303.7 577.4,310.4 577.8,299.4 578.2,303.1 578.6,297.9 579.0,298.3 579.4,296.6 579.8,296.5 580.2,297.1 580.6,295.6 581.0,294.2 581.4,296.3 581.8,294.2 582.2,299.5 582.6,293.0 583.0,296.3 583.4,291.7 583.8,291.6 584.2,290.4 584.6,290.7 585.0,289.6 585.4,290.2 585.8,289.7 586.2,291.8 586.6,290.1 587.0,295.0 587.4,290.4 587.8,289.8 588.2,287.8 588.6,286.6 589.0,287.1 589.4,286.2 589.8,284.6 590.2,287.0 590.6,284.3 591.0,288.4 591.4,290.8 591.8,288.9 592.2,282.1 592.6,284.0 593.0,280.3 593.4,280.4 593.8,279.4 594.2,281.5 594.6,278.6 595.0,278.9 595.4,278.1 595.8,279.3 596.2,278.4 596.6,287.6 597.0,277.9 597.4,297.8 597.8,305.8 598.2,300.7 598.6,275.9 599.0,284.5 599.4,275.4 599.8,276.6 600.2,273.5 600.6,288.2 601.0,272.9 601.4,278.1 601.8,269.4 602.2,270.7 602.6,268.0 603.0,270.9 603.4,273.4 603.8,271.2 604.2,267.1 604.6,265.6 605.0,266.0 605.4,269.3 605.8,271.1 606.2,267.5 606.6,264.2 607.0,262.9 607.4,261.4 607.8,260.5"/>
<polyline fill="none" stroke="#0a0ab8" stroke-width="1.35" stroke-linejoin="round" points="10.2,414.5 10.6,414.5 11.0,414.5 11.4,414.5 11.8,414.5 12.2,414.5 12.6,414.5 13.0,414.4 13.4,414.4 13.8,414.4 14.2,414.4 14.6,414.4 15.0,414.4 15.4,414.4 15.8,414.4 16.2,414.4 16.6,414.4 17.0,414.4 17.4,414.4 17.8,414.4 18.2,414.4 18.6,414.4 19.0,414.3 19.4,414.3 19.8,414.3 20.2,414.3 20.6,414.3 21.0,414.3 21.4,414.3 21.8,414.3 22.2,414.3 22.6,414.3 23.0,414.3 23.4,414.3 23.8,414.3 24.2,414.3 24.6,414.3 25.0,414.2 25.4,414.2 25.8,414.2 26.2,414.2 26.6,414.2 27.0,414.2 27.4,414.2 27.8,414.2 28.2,414.2 28.6,414.2 29.0,414.2 29.4,414.2 29.8,414.2 30.2,414.2 30.6,414.2 31.0,414.1 31.4,414.1 31.8,414.1 32.2,414.1 32.6,414.1 33.0,414.1 33.4,414.1 33.8,414.1 34.2,414.1 34.6,414.1 35.0,414.1 35.4,414.1 35.8,414.1 36.2,414.1 36.6,414.0 37.0,414.0 37.4,414.0 37.8,414.0 38.2,414.0 38.6,414.0 39.0,414.0 39.4,414.0 39.8,414.0 40.2,414.0 40.6,414.0 41.0,414.0 41.4,414.0 41.8,414.0 42.2,414.0 42.6,413.9 43.0,413.9 43.4,413.9 43.8,413.9 44.2,413.9 44.6,413.9 45.0,413.9 45.4,413.9 45.8,413.9 46.2,413.9 46.6,413.9 47.0,413.9 47.4,413.9 47.8,413.9 48.2,413.9 48.6,413.8 49.0,413.8 49.4,413.8 49.8,413.8 50.2,413.8 50.6,413.8 51.0,413.8 51.4,413.8 51.8,413.8 52.2,413.8 52.6,413.8 53.0,413.8 53.4,413.8 53.8,413.8 54.2,413.8 54.6,413.7 55.0,413.7 55.4,413.7 55.8,413.7 56.2,413.7 56.6,413.7 57.0,413.7 57.4,413.7 57.8,413.7 58.2,413.7 58.6,413.7 59.0,413.7 59.4,413.7 59.8,413.7 60.2,413.6 60.6,413.6 61.0,413.6 61.4,413.6 61.8,413.6 62.2,413.6 62.6,413.6 63.0,413.6 63.4,413.6 63.8,413.6 64.2,413.6 64.6,413.6 65.0,413.6 65.4,413.6 65.8,413.6 66.2,413.5 66.6,413.5 67.0,413.5 67.4,413.5 67.8,413.5 68.2,413.5 68.6,413.5 69.0,413.5 69.4,413.5 69.8,413.5 70.2,413.5 70.6,413.5 71.0,413.5 71.4,413.5 71.8,413.4 72.2,413.4 72.6,413.4 73.0,413.4 73.4,413.4 73.8,413.4 74.2,413.4 74.6,413.4 75.0,413.4 75.4,413.4 75.8,413.4 76.2,413.4 76.6,413.4 77.0,413.4 77.4,413.3 77.8,413.3 78.2,413.3 78.6,413.3 79.0,413.3 79.4,413.3 79.8,413.3 80.2,413.3 80.6,413.3 81.0,413.3 81.4,413.3 81.8,413.3 82.2,413.3 82.6,413.3 83.0,413.2 83.4,413.2 83.8,413.2 84.2,413.2 84.6,413.2 85.0,413.2 85.4,413.2 85.8,413.2 86.2,413.2 86.6,413.2 87.0,413.2 87.4,413.2 87.8,413.2 88.2,413.2 88.6,413.2 89.0,413.1 89.4,413.1 89.8,413.1 90.2,413.1 90.6,413.1 91.0,413.1 91.4,413.1 91.8,413.1 92.2,413.1 92.6,413.1 93.0,413.1 93.4,413.1 93.8,413.1 94.2,413.1 94.6,413.1 95.0,413.0 95.4,413.0 95.8,413.0 96.2,413.0 96.6,413.0 97.0,413.0 97.4,413.0 97.8,413.0 98.2,413.0 98.6,413.0 99.0,413.0 99.4,413.0 99.8,413.0 100.2,413.0 100.6,413.0 101.0,413.0 101.4,412.9 101.8,412.9 102.2,412.9 102.6,412.9 103.0,412.9 103.4,412.9 103.8,412.9 104.2,412.9 104.6,412.9 105.0,412.9 105.4,412.9 105.8,412.9 106.2,412.9 106.6,412.9 107.0,412.9 107.4,412.9 107.8,412.9 108.2,412.8 108.6,412.8 109.0,412.8 109.4,412.8 109.8,412.8 110.2,412.8 110.6,412.8 111.0,412.8 111.4,412.8 111.8,412.8 112.2,412.8 112.6,412.8 113.0,412.8 113.4,412.8 113.8,412.8 114.2,412.8 114.6,412.7 115.0,412.7 115.4,412.7 115.8,412.7 116.2,412.7 116.6,412.7 117.0,412.7 117.4,412.7 117.8,412.7 118.2,412.7 118.6,412.7 119.0,412.7 119.4,412.7 119.8,412.7 120.2,412.7 120.6,412.6 121.0,412.6 121.4,412.6 121.8,412.6 122.2,412.6 122.6,412.6 123.0,412.6 123.4,412.6 123.8,412.6 124.2,412.6 124.6,412.6 125.0,412.6 125.4,412.6 125.8,412.6 126.2,412.6 126.6,412.5 127.0,412.5 127.4,412.5 127.8,412.5 128.2,412.5 128.6,412.5 129.0,412.5 129.4,412.5 129.8,412.5 130.2,412.5 130.6,412.5 131.0,412.5 131.4,412.5 131.8,412.5 132.2,412.4 132.6,412.4 133.0,412.4 133.4,412.4 133.8,412.4 134.2,412.4 134.6,412.4 135.0,412.4 135.4,412.4 135.8,412.4 136.2,412.4 136.6,412.4 137.0,412.4 137.4,412.3 137.8,412.3 138.2,412.3 138.6,412.3 139.0,412.3 139.4,412.3 139.8,412.3 140.2,412.3 140.6,412.3 141.0,412.3 141.4,412.3 141.8,412.3 142.2,412.2 142.6,412.2 143.0,412.2 143.4,412.2 143.8,412.2 144.2,412.2 144.6,412.2 145.0,412.2 145.4,412.2 145.8,412.2 146.2,412.2 146.6,412.1 147.0,412.1 147.4,412.1 147.8,412.1 148.2,412.1 148.6,412.1 149.0,412.1 149.4,412.1 149.8,412.1 150.2,412.1 150.6,412.1 151.0,412.0 151.4,412.0 151.8,412.0 152.2,412.0 152.6,412.0 153.0,412.0 153.4,412.0 153.8,412.0 154.2,412.0 154.6,411.9 155.0,411.9 155.4,411.9 155.8,411.9 156.2,411.9 156.6,411.9 157.0,411.9 157.4,411.9 157.8,411.9 158.2,411.9 158.6,411.8 159.0,411.8 159.4,411.8 159.8,411.8 160.2,411.8 160.6,411.8 161.0,411.8 161.4,411.8 161.8,411.7 162.2,411.7 162.6,411.7 163.0,411.7 163.4,411.7 163.8,411.7 164.2,411.7 164.6,411.7 165.0,411.7 165.4,411.6 165.8,411.6 166.2,411.6 166.6,411.6 167.0,411.6 167.4,411.6 167.8,411.6 168.2,411.6 168.6,411.6 169.0,411.5 169.4,411.5 169.8,411.5 170.2,411.5 170.6,411.5 171.0,411.5 171.4,411.5 171.8,411.5 172.2,411.5 172.6,411.4 173.0,411.4 173.4,411.4 173.8,411.4 174.2,411.4 174.6,411.4 175.0,411.4 175.4,411.4 175.8,411.3 176.2,411.3 176.6,411.3 177.0,411.3 177.4,411.3 177.8,411.3 178.2,411.3 178.6,411.3 179.0,411.3 179.4,411.2 179.8,411.2 180.2,411.2 180.6,411.2 181.0,411.2 181.4,411.2 181.8,411.2 182.2,411.2 182.6,411.1 183.0,411.1 183.4,411.1 183.8,411.1 184.2,411.1 184.6,411.1 185.0,411.1 185.4,411.1 185.8,411.1 186.2,411.0 186.6,411.0 187.0,411.0 187.4,411.0 187.8,411.0 188.2,411.0 188.6,411.0 189.0,411.0 189.4,410.9 189.8,410.9 190.2,410.9 190.6,410.9 191.0,410.9 191.4,410.9 191.8,410.9 192.2,410.9 192.6,410.8 193.0,410.8 193.4,410.8 193.8,410.8 194.2,410.8 194.6,410.8 195.0,410.8 195.4,410.7 195.8,410.7 196.2,410.7 196.6,410.7 197.0,410.7 197.4,410.7 197.8,410.7 198.2,410.7 198.6,410.6 199.0,410.6 199.4,410.6 199.8,410.6 200.2,410.6 200.6,410.6 201.0,410.6 201.4,410.5 201.8,410.5 202.2,410.5 202.6,410.5 203.0,410.5 203.4,410.5 203.8,410.5 204.2,410.4 204.6,410.4 205.0,410.4 205.4,410.4 205.8,410.4 206.2,410.4 206.6,410.3 207.0,410.3 207.4,410.3 207.8,410.3 208.2,410.3 208.6,410.3 209.0,410.3 209.4,410.2 209.8,410.2 210.2,410.2 210.6,410.2 211.0,410.2 211.4,410.2 211.8,410.1 212.2,410.1 212.6,410.1 213.0,410.1 213.4,410.1 213.8,410.1 214.2,410.0 214.6,410.0 215.0,410.0 215.4,410.0 215.8,410.0 216.2,410.0 216.6,409.9 217.0,409.9 217.4,409.9 217.8,409.9 218.2,409.9 218.6,409.8 219.0,409.8 219.4,409.8 219.8,409.8 220.2,409.8 220.6,409.8 221.0,409.7 221.4,409.7 221.8,409.7 222.2,409.7 222.6,409.7 223.0,409.6 223.4,409.6 223.8,409.6 224.2,409.6 224.6,409.6 225.0,409.5 225.4,409.5 225.8,409.5 226.2,409.5 226.6,409.5 227.0,409.4 227.4,409.4 227.8,409.4 228.2,409.4 228.6,409.4 229.0,409.3 229.4,409.3 229.8,409.3 230.2,409.3 230.6,409.2 231.0,409.2 231.4,409.2 231.8,409.2 232.2,409.2 232.6,409.1 233.0,409.1 233.4,409.1 233.8,409.1 234.2,409.0 234.6,409.0 235.0,409.0 235.4,409.0 235.8,409.0 236.2,408.9 236.6,408.9 237.0,408.9 237.4,408.9 237.8,408.8 238.2,408.8 238.6,408.8 239.0,408.8 239.4,408.7 239.8,408.7 240.2,408.7 240.6,408.7 241.0,408.6 241.4,408.6 241.8,408.6 242.2,408.6 242.6,408.5 243.0,408.5 243.4,408.5 243.8,408.5 244.2,408.4 244.6,408.4 245.0,408.4 245.4,408.4 245.8,408.3 246.2,408.3 246.6,408.3 247.0,408.2 247.4,408.2 247.8,408.2 248.2,408.2 248.6,408.1 249.0,408.1 249.4,408.1 249.8,408.1 250.2,408.0 250.6,408.0 251.0,408.0 251.4,407.9 251.8,407.9 252.2,407.9 252.6,407.9 253.0,407.8 253.4,407.8 253.8,407.8 254.2,407.7 254.6,407.7 255.0,407.7 255.4,407.7 255.8,407.6 256.2,407.6 256.6,407.6 257.0,407.5 257.4,407.5 257.8,407.5 258.2,407.4 258.6,407.4 259.0,407.4 259.4,407.4 259.8,407.3 260.2,407.3 260.6,407.3 261.0,407.2 261.4,407.2 261.8,407.2 262.2,407.1 262.6,407.1 263.0,407.1 263.4,407.0 263.8,407.0 264.2,407.0 264.6,406.9 265.0,406.9 265.4,406.9 265.8,406.9 266.2,406.8 266.6,406.8 267.0,406.8 267.4,406.7 267.8,406.7 268.2,406.7 268.6,406.6 269.0,406.6 269.4,406.6 269.8,406.5 270.2,406.5 270.6,406.5 271.0,406.4 271.4,406.4 271.8,406.4 272.2,406.3 272.6,406.3 273.0,406.3 273.4,406.2 273.8,406.2 274.2,406.2 274.6,406.1 275.0,406.1 275.4,406.1 275.8,406.0 276.2,406.0 276.6,406.0 277.0,405.9 277.4,405.9 277.8,405.9 278.2,405.8 278.6,405.8 279.0,405.7 279.4,405.7 279.8,405.7 280.2,405.6 280.6,405.6 281.0,405.6 281.4,405.5 281.8,405.5 282.2,405.5 282.6,405.4 283.0,405.4 283.4,405.4 283.8,405.3 284.2,405.3 284.6,405.2 285.0,405.2 285.4,405.2 285.8,405.1 286.2,405.1 286.6,405.1 287.0,405.0 287.4,405.0 287.8,405.0 288.2,404.9 288.6,404.9 289.0,404.8 289.4,404.8 289.8,404.8 290.2,404.7 290.6,404.7 291.0,404.7 291.4,404.6 291.8,404.6 292.2,404.5 292.6,404.5 293.0,404.5 293.4,404.4 293.8,404.4 294.2,404.4 294.6,404.3 295.0,404.3 295.4,404.2 295.8,404.2 296.2,404.2 296.6,404.1 297.0,404.1 297.4,404.1 297.8,404.0 298.2,404.0 298.6,403.9 299.0,403.9 299.4,403.9 299.8,403.8 300.2,403.8 300.6,403.7 301.0,403.7 301.4,403.7 301.8,403.6 302.2,403.6 302.6,403.6 303.0,403.5 303.4,403.5 303.8,403.4 304.2,403.4 304.6,403.4 305.0,403.3 305.4,403.3 305.8,403.2 306.2,403.2 306.6,403.2 307.0,403.1 307.4,403.1 307.8,403.0 308.2,403.0 308.6,403.0 309.0,402.9 309.4,402.9 309.8,402.8 310.2,402.8 310.6,402.8 311.0,402.7 311.4,402.7 311.8,402.6 312.2,402.6 312.6,402.6 313.0,402.5 313.4,402.5 313.8,402.4 314.2,402.4 314.6,402.4 315.0,402.3 315.4,402.3 315.8,402.2 316.2,402.2 316.6,402.1 317.0,402.1 317.4,402.1 317.8,402.0 318.2,402.0 318.6,401.9 319.0,401.9 319.4,401.9 319.8,401.8 320.2,401.8 320.6,401.7 321.0,401.7 321.4,401.7 321.8,401.6 322.2,401.6 322.6,401.5 323.0,401.5 323.4,401.4 323.8,401.4 324.2,401.3 324.6,401.3 325.0,401.3 325.4,401.2 325.8,401.2 326.2,401.1 326.6,401.1 327.0,401.0 327.4,401.0 327.8,400.9 328.2,400.9 328.6,400.8 329.0,400.8 329.4,400.7 329.8,400.7 330.2,400.6 330.6,400.6 331.0,400.5 331.4,400.5 331.8,400.4 332.2,400.4 332.6,400.3 333.0,400.3 333.4,400.2 333.8,400.2 334.2,400.1 334.6,400.1 335.0,400.0 335.4,399.9 335.8,399.9 336.2,399.8 336.6,399.8 337.0,399.7 337.4,399.7 337.8,399.6 338.2,399.6 338.6,399.5 339.0,399.4 339.4,399.4 339.8,399.3 340.2,399.3 340.6,399.2 341.0,399.2 341.4,399.1 341.8,399.1 342.2,399.0 342.6,398.9 343.0,398.9 343.4,398.8 343.8,398.8 344.2,398.7 344.6,398.6 345.0,398.6 345.4,398.5 345.8,398.5 346.2,398.4 346.6,398.3 347.0,398.3 347.4,398.2 347.8,398.2 348.2,398.1 348.6,398.0 349.0,398.0 349.4,397.9 349.8,397.9 350.2,397.8 350.6,397.7 351.0,397.7 351.4,397.6 351.8,397.6 352.2,397.5 352.6,397.4 353.0,397.4 353.4,397.3 353.8,397.3 354.2,397.2 354.6,397.1 355.0,397.1 355.4,397.0 355.8,396.9 356.2,396.9 356.6,396.8 357.0,396.8 357.4,396.7 357.8,396.6 358.2,396.6 358.6,396.5 359.0,396.5 359.4,396.4 359.8,396.3 360.2,396.3 360.6,396.2 361.0,396.1 361.4,396.1 361.8,396.0 362.2,396.0 362.6,395.9 363.0,395.8 363.4,395.8 363.8,395.7 364.2,395.7 364.6,395.6 365.0,395.5 365.4,395.5 365.8,395.4 366.2,395.3 366.6,395.3 367.0,395.2 367.4,395.2 367.8,395.1 368.2,395.0 368.6,395.0 369.0,394.9 369.4,394.8 369.8,394.8 370.2,394.7 370.6,394.7 371.0,394.6 371.4,394.5 371.8,394.5 372.2,394.4 372.6,394.3 373.0,394.3 373.4,394.2 373.8,394.2 374.2,394.1 374.6,394.0 375.0,394.0 375.4,393.9 375.8,393.8 376.2,393.8 376.6,393.7 377.0,393.6 377.4,393.6 377.8,393.5 378.2,393.4 378.6,393.4 379.0,393.3 379.4,393.3 379.8,393.2 380.2,393.1 380.6,393.1 381.0,393.0 381.4,392.9 381.8,392.9 382.2,392.8 382.6,392.7 383.0,392.6 383.4,392.6 383.8,392.5 384.2,392.4 384.6,392.4 385.0,392.3 385.4,392.2 385.8,392.2 386.2,392.1 386.6,392.0 387.0,391.9 387.4,391.9 387.8,391.8 388.2,391.7 388.6,391.7 389.0,391.6 389.4,391.5 389.8,391.4 390.2,391.4 390.6,391.3 391.0,391.2 391.4,391.1 391.8,391.1 392.2,391.0 392.6,390.9 393.0,390.8 393.4,390.8 393.8,390.7 394.2,390.6 394.6,390.5 395.0,390.4 395.4,390.4 395.8,390.3 396.2,390.2 396.6,390.1 397.0,390.0 397.4,389.9 397.8,389.9 398.2,389.8 398.6,389.7 399.0,389.6 399.4,389.5 399.8,389.4 400.2,389.4 400.6,389.3 401.0,389.2 401.4,389.1 401.8,389.0 402.2,388.9 402.6,388.8 403.0,388.7 403.4,388.6 403.8,388.5 404.2,388.4 404.6,388.3 405.0,388.2 405.4,388.1 405.8,388.0 406.2,387.8 406.6,387.7 407.0,387.6 407.4,387.5 407.8,387.4 408.2,387.3 408.6,387.2 409.0,387.0 409.4,386.9 409.8,386.8 410.2,386.7 410.6,386.6 411.0,386.4 411.4,386.3 411.8,386.2 412.2,386.1 412.6,385.9 413.0,385.8 413.4,385.7 413.8,385.6 414.2,385.4 414.6,385.3 415.0,385.2 415.4,385.1 415.8,384.9 416.2,384.8 416.6,384.7 417.0,384.6 417.4,384.4 417.8,384.3 418.2,384.2 418.6,384.1 419.0,383.9 419.4,383.8 419.8,383.7 420.2,383.6 420.6,383.5 421.0,383.4 421.4,383.2 421.8,383.1 422.2,383.0 422.6,382.9 423.0,382.8 423.4,382.7 423.8,382.6 424.2,382.4 424.6,382.3 425.0,382.2 425.4,382.1 425.8,382.0 426.2,381.9 426.6,381.8 427.0,381.7 427.4,381.6 427.8,381.5 428.2,381.5 428.6,381.4 429.0,381.3 429.4,381.2 429.8,381.1 430.2,381.0 430.6,380.9 431.0,380.8 431.4,380.7 431.8,380.6 432.2,380.5 432.6,380.5 433.0,380.4 433.4,380.3 433.8,380.2 434.2,380.1 434.6,380.0 435.0,379.9 435.4,379.8 435.8,379.7 436.2,379.6 436.6,379.5 437.0,379.4 437.4,379.3 437.8,379.2 438.2,379.0 438.6,378.9 439.0,378.8 439.4,378.7 439.8,378.6 440.2,378.4 440.6,378.3 441.0,378.2 441.4,378.0 441.8,377.9 442.2,377.8 442.6,377.6 443.0,377.5 443.4,377.3 443.8,377.2 444.2,377.1 444.6,376.9 445.0,376.8 445.4,376.6 445.8,376.5 446.2,376.3 446.6,376.2 447.0,376.0 447.4,375.8 447.8,375.7 448.2,375.5 448.6,375.4 449.0,375.2 449.4,375.1 449.8,374.9 450.2,374.7 450.6,374.6 451.0,374.4 451.4,374.3 451.8,374.1 452.2,374.0 452.6,373.8 453.0,373.6 453.4,373.5 453.8,373.3 454.2,373.2 454.6,373.0 455.0,372.9 455.4,372.7 455.8,372.5 456.2,372.4 456.6,372.2 457.0,372.1 457.4,371.9 457.8,371.8 458.2,371.6 458.6,371.5 459.0,371.4 459.4,371.2 459.8,371.1 460.2,370.9 460.6,370.8 461.0,370.7 461.4,370.5 461.8,370.4 462.2,370.3 462.6,370.1 463.0,370.0 463.4,369.9 463.8,369.7 464.2,369.6 464.6,369.5 465.0,369.3 465.4,369.2 465.8,369.1 466.2,369.0 466.6,368.8 467.0,368.7 467.4,368.6 467.8,368.5 468.2,368.3 468.6,368.2 469.0,368.1 469.4,368.0 469.8,367.9 470.2,367.7 470.6,367.6 471.0,367.5 471.4,367.4 471.8,367.2 472.2,367.1 472.6,367.0 473.0,366.9 473.4,366.7 473.8,366.6 474.2,366.5 474.6,366.3 475.0,366.2 475.4,366.1 475.8,366.0 476.2,365.8 476.6,365.7 477.0,365.6 477.4,365.4 477.8,365.3 478.2,365.1 478.6,365.0 479.0,364.9 479.4,364.7 479.8,364.6 480.2,364.4 480.6,364.3 481.0,364.1 481.4,364.0 481.8,363.8 482.2,363.6 482.6,363.5 483.0,363.3 483.4,363.1 483.8,362.9 484.2,362.8 484.6,362.6 485.0,362.4 485.4,362.2 485.8,362.0 486.2,361.8 486.6,361.6 487.0,361.4 487.4,361.2 487.8,361.1 488.2,360.9 488.6,360.7 489.0,360.5 489.4,360.3 489.8,360.1 490.2,359.9 490.6,359.7 491.0,359.5 491.4,359.3 491.8,359.1 492.2,358.9 492.6,358.8 493.0,358.6 493.4,358.4 493.8,358.2 494.2,358.0 494.6,357.8 495.0,357.6 495.4,357.4 495.8,357.2 496.2,357.0 496.6,356.8 497.0,356.6 497.4,356.4 497.8,356.2 498.2,356.0 498.6,355.7 499.0,355.5 499.4,355.3 499.8,355.1 500.2,354.9 500.6,354.7 501.0,354.5 501.4,354.2 501.8,354.0 502.2,353.8 502.6,353.6 503.0,353.4 503.4,353.1 503.8,352.9 504.2,352.7 504.6,352.5 505.0,352.3 505.4,352.0 505.8,351.8 506.2,351.6 506.6,351.4 507.0,351.2 507.4,350.9 507.8,350.7 508.2,350.5 508.6,350.3 509.0,350.1 509.4,349.8 509.8,349.6 510.2,349.4 510.6,349.2 511.0,348.9 511.4,348.7 511.8,348.5 512.2,348.2 512.6,348.0 513.0,347.8 513.4,347.6 513.8,347.3 514.2,347.1 514.6,346.9 515.0,346.6 515.4,346.4 515.8,346.2 516.2,345.9 516.6,345.7 517.0,345.5 517.4,345.2 517.8,345.0 518.2,344.8 518.6,344.5 519.0,344.3 519.4,344.1 519.8,343.8 520.2,343.6 520.6,343.3 521.0,343.1 521.4,342.8 521.8,342.6 522.2,342.3 522.6,342.1 523.0,341.8 523.4,341.5 523.8,341.3 524.2,341.0 524.6,340.7 525.0,340.5 525.4,340.2 525.8,339.9 526.2,339.6 526.6,339.4 527.0,339.1 527.4,338.8 527.8,338.5 528.2,338.2 528.6,338.0 529.0,337.7 529.4,337.4 529.8,337.1 530.2,336.9 530.6,336.6 531.0,336.3 531.4,336.0 531.8,335.8 532.2,335.5 532.6,335.2 533.0,334.9 533.4,334.6 533.8,334.4 534.2,334.1 534.6,333.8 535.0,333.5 535.4,333.2 535.8,333.0 536.2,332.7 536.6,332.4 537.0,332.1 537.4,331.8 537.8,331.5 538.2,331.3 538.6,331.0 539.0,330.7 539.4,330.4 539.8,330.1 540.2,329.9 540.6,329.6 541.0,329.3 541.4,329.0 541.8,328.8 542.2,328.5 542.6,328.2 543.0,328.0 543.4,327.7 543.8,327.4 544.2,327.2 544.6,326.9 545.0,326.6 545.4,326.4 545.8,326.1 546.2,325.8 546.6,325.5 547.0,325.2 547.4,325.0 547.8,324.7 548.2,324.4 548.6,324.1 549.0,323.8 549.4,323.5 549.8,323.2 550.2,322.8 550.6,322.5 551.0,322.2 551.4,321.8 551.8,321.5 552.2,321.2 552.6,320.8 553.0,320.4 553.4,320.1 553.8,319.7 554.2,319.4 554.6,319.0 555.0,318.6 555.4,318.3 555.8,317.9 556.2,317.5 556.6,317.1 557.0,316.8 557.4,316.4 557.8,316.0 558.2,315.6 558.6,315.3 559.0,314.9 559.4,314.5 559.8,314.2 560.2,313.8 560.6,313.5 561.0,313.1 561.4,312.8 561.8,312.4 562.2,312.1 562.6,311.7 563.0,311.4 563.4,311.0 563.8,310.7 564.2,310.3 564.6,310.0 565.0,309.6 565.4,309.3 565.8,308.9 566.2,308.6 566.6,308.2 567.0,307.8 567.4,307.5 567.8,307.1 568.2,306.7 568.6,306.4 569.0,306.0 569.4,305.6 569.8,305.2 570.2,304.8 570.6,304.4 571.0,304.0 571.4,303.6 571.8,303.1 572.2,302.7 572.6,302.3 573.0,301.9 573.4,301.4 573.8,301.0 574.2,300.5 574.6,300.1 575.0,299.7 575.4,299.2 575.8,298.8 576.2,298.3 576.6,297.9 577.0,297.4 577.4,296.9 577.8,296.5 578.2,296.0 578.6,295.6 579.0,295.1 579.4,294.7 579.8,294.2 580.2,293.8 580.6,293.3 581.0,292.9 581.4,292.4 581.8,292.0 582.2,291.5 582.6,291.1 583.0,290.6 583.4,290.2 583.8,289.7 584.2,289.3 584.6,288.8 585.0,288.3 585.4,287.9 585.8,287.4 586.2,287.0 586.6,286.5 587.0,286.0 587.4,285.6 587.8,285.1 588.2,284.6 588.6,284.2 589.0,283.7 589.4,283.2 589.8,282.7 590.2,282.3 590.6,281.8 591.0,281.3 591.4,280.8 591.8,280.3 592.2,279.8 592.6,279.3 593.0,278.9 593.4,278.4 593.8,277.9 594.2,277.4 594.6,276.9 595.0,276.4 595.4,275.9 595.8,275.4 596.2,274.9 596.6,274.4 597.0,273.9 597.4,273.3 597.8,272.8 598.2,272.3 598.6,271.8 599.0,271.3 599.4,270.8 599.8,270.3 600.2,269.7 600.6,269.2 601.0,268.7 601.4,268.1 601.8,267.6 602.2,267.1 602.6,266.5 603.0,266.0 603.4,265.4 603.8,264.9 604.2,264.3 604.6,263.8 605.0,263.2 605.4,262.6 605.8,262.1 606.2,261.5 606.6,261.0 607.0,260.4 607.4,259.9 607.8,259.4"/>
<line x1="450.0" y1="375.3" x2="450.0" y2="372.3" stroke="#0a0ab8" stroke-width="1.3"/>
<line x1="456.5" y1="372.8" x2="456.5" y2="369.3" stroke="#0a0ab8" stroke-width="1.3"/>
<line x1="511.0" y1="349.4" x2="511.0" y2="343.9" stroke="#0a0ab8" stroke-width="1.3"/>
<line x1="521.5" y1="343.3" x2="521.5" y2="338.8" stroke="#0a0ab8" stroke-width="1.3"/>
<line x1="526.5" y1="339.9" x2="526.5" y2="334.9" stroke="#0a0ab8" stroke-width="1.3"/>
<line x1="533.0" y1="335.4" x2="533.0" y2="331.9" stroke="#0a0ab8" stroke-width="1.3"/>
<line x1="563.0" y1="311.9" x2="563.0" y2="307.4" stroke="#0a0ab8" stroke-width="1.3"/>
<line x1="566.4" y1="308.9" x2="566.4" y2="303.4" stroke="#0a0ab8" stroke-width="1.3"/>
<line x1="573.7" y1="301.6" x2="573.7" y2="295.1" stroke="#0a0ab8" stroke-width="1.3"/>
<line x1="578.5" y1="296.2" x2="578.5" y2="289.2" stroke="#0a0ab8" stroke-width="1.3"/>
<line x1="602.0" y1="267.8" x2="602.0" y2="262.8" stroke="#0a0ab8" stroke-width="1.3"/>
<polygon fill="#0aa50a" stroke="#0aa50a" stroke-width="0.5" stroke-linejoin="round" points="10.6,467.0 11.0,464.7 11.8,464.9 12.6,464.9 13.4,464.2 14.2,465.3 15.0,465.4 15.8,464.7 16.6,464.8 17.4,465.4 18.2,464.9 19.0,464.1 19.8,465.0 20.6,464.7 21.4,465.1 22.2,464.4 23.0,463.1 23.8,460.2 24.6,461.2 25.4,462.7 26.2,464.7 27.0,464.7 27.8,465.4 28.6,465.7 29.4,464.6 30.2,465.2 31.0,464.2 31.8,464.9 32.6,462.2 33.4,464.8 34.2,464.2 35.0,463.0 35.8,460.7 36.6,461.9 37.4,463.7 38.2,465.2 39.0,464.5 39.8,465.2 40.6,464.6 41.4,465.4 42.2,464.4 43.0,464.2 43.8,462.7 44.6,460.8 45.4,460.4 46.2,462.8 47.0,463.8 47.8,464.8 48.6,464.9 49.4,465.0 50.2,465.2 51.0,465.0 51.8,464.5 52.6,463.4 53.4,461.5 54.2,459.5 55.0,462.2 55.8,463.5 56.6,465.2 57.4,464.3 58.2,465.1 59.0,463.9 59.8,464.4 60.6,464.9 61.4,465.3 62.2,464.6 63.0,465.0 63.8,465.4 64.6,465.0 65.4,464.7 66.2,464.4 67.0,465.7 67.8,465.3 68.6,465.4 69.4,464.8 70.2,464.3 71.0,462.8 71.8,461.8 72.6,463.3 73.4,463.6 74.2,465.0 75.0,464.3 75.8,465.7 76.6,465.2 77.4,464.6 78.2,464.4 79.0,462.3 79.8,461.3 80.6,462.0 81.4,463.8 82.2,463.5 83.0,465.1 83.8,464.2 84.6,464.6 85.4,465.3 86.2,464.4 87.0,463.3 87.8,461.5 88.6,459.7 89.4,458.3 90.2,461.7 91.0,463.9 91.8,465.1 92.6,463.2 93.4,461.9 94.2,461.2 95.0,462.0 95.8,464.2 96.6,465.7 97.4,465.0 98.2,465.7 99.0,465.4 99.8,465.2 100.6,464.9 101.4,464.8 102.2,464.4 103.0,465.0 103.8,465.3 104.6,465.4 105.4,463.8 106.2,462.3 107.0,459.7 107.8,460.4 108.6,460.8 109.4,463.6 110.2,465.7 111.0,465.5 111.8,465.0 112.6,464.6 113.4,463.4 114.2,460.6 115.0,460.4 115.8,461.7 116.6,462.8 117.4,464.6 118.2,464.7 119.0,465.3 119.8,464.8 120.6,465.2 121.4,465.4 122.2,465.2 123.0,465.0 123.8,465.4 124.6,465.3 125.4,464.8 126.2,465.3 127.0,464.9 127.8,464.5 128.6,462.4 129.4,459.2 130.2,457.6 131.0,460.2 131.8,463.0 132.6,458.8 133.4,456.3 134.2,453.8 135.0,458.0 135.8,461.5 136.6,460.6 137.4,460.6 138.2,461.8 139.0,463.8 139.8,464.9 140.6,465.5 141.4,464.9 142.2,464.0 143.0,463.3 143.8,460.4 144.6,457.6 145.4,457.8 146.2,460.6 147.0,460.4 147.8,456.2 148.6,459.3 149.4,460.3 150.2,463.2 151.0,465.6 151.8,465.3 152.6,464.7 153.4,465.4 154.2,464.3 155.0,465.0 155.8,465.6 156.6,463.8 157.4,464.9 158.2,464.4 159.0,462.7 159.8,462.6 160.6,462.3 161.4,463.6 162.2,465.0 163.0,464.4 163.8,464.9 164.6,464.7 165.4,465.7 166.2,465.4 167.0,465.1 167.8,464.9 168.6,465.4 169.4,464.9 170.2,464.7 171.0,464.5 171.8,465.3 172.6,465.1 173.4,462.3 174.2,461.2 175.0,459.9 175.8,460.7 176.6,462.8 177.4,464.1 178.2,465.0 179.0,464.4 179.8,464.8 180.6,465.1 181.4,465.5 182.2,463.8 183.0,462.8 183.8,460.9 184.6,461.4 185.4,463.4 186.2,464.8 187.0,464.7 187.8,465.4 188.6,460.5 189.4,457.4 190.2,453.0 191.0,455.6 191.8,459.0 192.6,463.0 193.4,464.5 194.2,464.8 195.0,464.6 195.8,464.4 196.6,465.1 197.4,465.7 198.2,464.9 199.0,465.5 199.8,465.5 200.6,465.4 201.4,463.8 202.2,465.5 203.0,465.1 203.8,464.4 204.6,464.2 205.4,465.2 206.2,465.4 207.0,465.3 207.8,463.9 208.6,465.7 209.4,464.8 210.2,463.1 211.0,460.6 211.8,459.4 212.6,460.8 213.4,461.3 214.2,463.9 215.0,463.7 215.8,464.3 216.6,464.5 217.4,465.6 218.2,463.5 219.0,460.4 219.8,457.4 220.6,460.6 221.4,462.3 222.2,463.9 223.0,463.8 223.8,465.7 224.6,464.6 225.4,464.3 226.2,465.0 227.0,465.3 227.8,465.1 228.6,464.7 229.4,464.9 230.2,465.3 231.0,464.3 231.8,465.1 232.6,464.7 233.4,463.8 234.2,465.3 235.0,465.0 235.8,464.5 236.6,465.2 237.4,465.3 238.2,465.2 239.0,464.9 239.8,465.2 240.6,463.1 241.4,465.0 242.2,464.0 243.0,464.6 243.8,463.2 244.6,465.3 245.4,464.4 246.2,464.5 247.0,464.3 247.8,465.1 248.6,463.8 249.4,459.7 250.2,458.2 251.0,455.4 251.8,457.1 252.6,461.1 253.4,459.0 254.2,457.8 255.0,460.9 255.8,462.1 256.6,464.6 257.4,462.4 258.2,459.3 259.0,456.7 259.8,460.2 260.6,461.6 261.4,460.6 262.2,459.1 263.0,460.6 263.8,460.9 264.6,463.6 265.4,465.2 266.2,464.5 267.0,463.5 267.8,464.1 268.6,465.0 269.4,464.6 270.2,464.4 271.0,465.0 271.8,465.4 272.6,465.6 273.4,465.6 274.2,465.1 275.0,465.3 275.8,465.2 276.6,464.2 277.4,463.8 278.2,464.8 279.0,464.2 279.8,464.3 280.6,463.5 281.4,461.3 282.2,456.8 283.0,454.1 283.8,456.9 284.6,460.1 285.4,459.3 286.2,460.0 287.0,461.4 287.8,463.5 288.6,463.9 289.4,464.9 290.2,460.3 291.0,458.5 291.8,453.7 292.6,456.4 293.4,458.7 294.2,460.1 295.0,456.4 295.8,457.9 296.6,462.0 297.4,464.0 298.2,465.3 299.0,464.8 299.8,465.1 300.6,465.6 301.4,465.1 302.2,464.9 303.0,464.7 303.8,464.7 304.6,464.9 305.4,465.3 306.2,465.3 307.0,463.6 307.8,465.4 308.6,465.2 309.4,462.7 310.2,461.1 311.0,458.8 311.8,461.2 312.6,462.2 313.4,465.3 314.2,464.8 315.0,464.5 315.8,465.6 316.6,464.9 317.4,464.9 318.2,465.7 319.0,464.6 319.8,465.2 320.6,462.7 321.4,464.9 322.2,464.4 323.0,465.4 323.8,464.5 324.6,463.7 325.4,462.2 326.2,461.4 327.0,463.5 327.8,464.4 328.6,465.6 329.4,464.5 330.2,465.0 331.0,464.7 331.8,465.4 332.6,465.5 333.4,465.2 334.2,463.6 335.0,462.2 335.8,460.3 336.6,460.1 337.4,462.7 338.2,464.5 339.0,465.3 339.8,464.9 340.6,463.0 341.4,462.0 342.2,460.2 343.0,462.9 343.8,464.0 344.6,464.8 345.4,465.6 346.2,463.9 347.0,464.8 347.8,464.7 348.6,465.2 349.4,465.1 350.2,464.3 351.0,461.8 351.8,458.4 352.6,458.1 353.4,459.3 354.2,461.7 355.0,462.4 355.8,460.3 356.6,461.5 357.4,462.1 358.2,464.5 359.0,465.1 359.8,465.4 360.6,464.9 361.4,464.2 362.2,464.2 363.0,463.1 363.8,460.7 364.6,462.0 365.4,463.5 366.2,464.9 367.0,463.4 367.8,465.5 368.6,463.0 369.4,464.5 370.2,464.0 371.0,462.7 371.8,459.9 372.6,462.0 373.4,462.9 374.2,464.7 375.0,464.3 375.8,465.2 376.6,465.0 377.4,465.2 378.2,465.7 379.0,464.9 379.8,465.3 380.6,464.1 381.4,465.6 382.2,464.9 383.0,463.9 383.8,461.4 384.6,460.6 385.4,459.5 386.2,461.7 387.0,463.1 387.8,465.2 388.6,463.8 389.4,462.2 390.2,460.1 391.0,462.9 391.8,463.9 392.6,465.2 393.4,465.4 394.2,465.6 395.0,465.0 395.8,464.5 396.6,465.6 397.4,465.1 398.2,464.6 399.0,463.7 399.8,461.6 400.6,462.7 401.4,463.5 402.2,464.5 403.0,465.2 403.8,463.6 404.6,464.5 405.4,465.2 406.2,465.2 407.0,465.7 407.8,464.9 408.6,465.0 409.4,465.4 410.2,465.2 411.0,464.1 411.8,465.2 412.6,465.0 413.4,465.0 414.2,465.7 415.0,465.2 415.8,464.7 416.6,462.9 417.4,462.1 418.2,460.2 419.0,463.0 419.8,464.1 420.6,464.5 421.4,465.2 422.2,465.2 423.0,465.0 423.8,465.1 424.6,465.3 425.4,463.7 426.2,463.6 427.0,463.3 427.8,462.8 428.6,462.0 429.4,464.3 430.2,464.4 431.0,465.5 431.8,465.3 432.6,464.5 433.4,463.8 434.2,465.3 435.0,463.7 435.8,465.4 436.6,465.7 437.4,465.5 438.2,463.9 439.0,464.5 439.8,463.3 440.6,461.0 441.4,462.1 442.2,463.2 443.0,465.0 443.8,465.1 444.6,465.4 445.4,464.7 446.2,464.4 447.0,465.2 447.8,465.7 448.6,465.0 449.4,464.8 450.2,464.9 451.0,465.2 451.8,465.1 452.6,463.1 453.4,464.0 454.2,462.5 455.0,460.6 455.8,462.2 456.6,464.2 457.4,465.3 458.2,465.0 459.0,464.7 459.8,464.2 460.6,465.2 461.4,463.7 462.2,465.5 463.0,465.5 463.8,464.7 464.6,465.3 465.4,464.8 466.2,464.7 467.0,465.5 467.8,465.0 468.6,464.4 469.4,462.9 470.2,461.8 471.0,463.6 471.8,464.9 472.6,464.7 473.4,464.2 474.2,464.2 475.0,465.2 475.8,465.1 476.6,464.4 477.4,464.9 478.2,463.7 479.0,461.0 479.8,458.7 480.6,459.7 481.4,461.6 482.2,464.0 483.0,462.2 483.8,460.9 484.6,462.2 485.4,462.8 486.2,464.9 487.0,465.5 487.8,464.5 488.6,463.5 489.4,462.1 490.2,461.9 491.0,463.3 491.8,464.2 492.6,464.7 493.4,464.1 494.2,464.5 495.0,464.8 495.8,465.1 496.6,464.1 497.4,463.2 498.2,461.9 499.0,463.3 499.8,464.2 500.6,465.2 501.4,464.6 502.2,465.3 503.0,465.2 503.8,464.1 504.6,464.8 505.4,464.5 506.2,464.9 507.0,460.6 507.8,457.7 508.6,453.3 509.4,450.9 510.2,456.6 511.0,454.8 511.8,454.2 512.6,458.5 513.4,458.8 514.2,457.4 515.0,459.7 515.8,461.4 516.6,461.8 517.4,459.4 518.2,459.3 519.0,460.2 519.8,462.8 520.6,464.4 521.4,462.7 522.2,460.6 523.0,459.7 523.8,460.7 524.6,462.9 525.4,465.4 526.2,464.7 527.0,465.2 527.8,463.8 528.6,462.4 529.4,458.8 530.2,457.8 531.0,460.5 531.8,462.9 532.6,463.4 533.4,461.2 534.2,460.3 535.0,462.5 535.8,464.5 536.6,464.9 537.4,465.6 538.2,464.5 539.0,463.2 539.8,462.3 540.6,462.1 541.4,464.1 542.2,463.8 543.0,464.5 543.8,465.3 544.6,464.9 545.4,463.7 546.2,461.9 547.0,458.2 547.8,459.2 548.6,460.8 549.4,463.4 550.2,464.7 551.0,463.1 551.8,462.1 552.6,462.1 553.4,464.3 554.2,464.4 555.0,465.1 555.8,465.4 556.6,461.8 557.4,456.2 558.2,453.3 559.0,453.4 559.8,455.0 560.6,459.5 561.4,454.0 562.2,456.5 563.0,461.2 563.8,458.6 564.6,459.7 565.4,461.3 566.2,463.5 567.0,462.0 567.8,460.1 568.6,461.9 569.4,463.1 570.2,461.9 571.0,459.8 571.8,456.3 572.6,459.5 573.4,460.9 574.2,460.8 575.0,460.5 575.8,460.6 576.6,463.5 577.4,462.1 578.2,462.7 579.0,463.1 579.8,464.2 580.6,465.5 581.4,464.8 582.2,464.2 583.0,462.2 583.8,462.0 584.6,463.4 585.4,464.0 586.2,463.8 587.0,462.0 587.8,463.5 588.6,464.6 589.4,465.4 590.2,465.2 591.0,464.9 591.8,465.4 592.6,464.6 593.4,464.0 594.2,465.1 595.0,465.6 595.8,464.0 596.6,464.6 597.4,464.5 598.2,463.0 599.0,461.7 599.8,463.3 600.6,463.7 601.4,462.4 602.2,462.3 603.0,463.1 603.8,464.3 604.6,464.7 605.4,463.5 606.2,463.3 607.0,463.9 607.8,465.2 608.6,464.3 608.8,467.0"/>
<line x1="10.2" y1="467.3" x2="609.5" y2="467.3" stroke="#8f7fb0" stroke-width="0.7"/>
<line x1="10.2" y1="242.8" x2="10.2" y2="477" stroke="#1c1c1c" stroke-width="1.25"/>
<line x1="9.6" y1="243.3" x2="610.0" y2="243.3" stroke="#2a2a2a" stroke-width="1.0"/>
<line x1="609.5" y1="243.3" x2="609.5" y2="467.4" stroke="#1c1c1c" stroke-width="1.1"/>
<line x1="10.2" y1="422.6" x2="610.0" y2="422.6" stroke="#525252" stroke-width="2.1"/>
</svg>
<div class="ax" style="left:612.4px;top:259.5px;">1772849</div>
<div class="ax" style="left:612.4px;top:279.4px;">1540919</div>
<div class="ax" style="left:612.4px;top:299.2px;">1308990</div>
<div class="ax" style="left:612.4px;top:319.1px;">1077060</div>
<div class="ax" style="left:612.4px;top:338.9px;">845130</div>
<div class="ax" style="left:612.4px;top:358.8px;">613201</div>
<div class="ax" style="left:612.4px;top:378.6px;">381271</div>
<div class="ax" style="left:612.4px;top:398.5px;">149342</div>
<div class="ax" style="left:612.4px;top:418.3px;">-82588</div>
<svg class="abs" style="left:0;top:0;" width="640" height="480" viewBox="0 0 640 480"><rect x="611" y="423.3" width="25" height="8" fill="#fff"/></svg>
<div class="ax" style="left:612.4px;top:422.9px;">25.0%</div>
<div class="ax" style="left:613.3px;top:463.1px;">0.0%</div>
<div class="ax" style="left:12.6px;top:424.3px;transform:scaleX(0.795);">Deposit Load</div>
<div class="ax" style="left:12.4px;top:243.8px;font-size:7px;color:#1414d8;-webkit-text-stroke:0.2px #1414d8;transform:scaleX(0.775);">Balance</div>
<div class="ax" style="left:34.4px;top:243.8px;font-size:7px;transform:scaleX(1);">/</div>
<div class="ax" style="left:38.6px;top:243.8px;font-size:7px;color:#22aa22;-webkit-text-stroke:0.2px #22aa22;transform:scaleX(0.873);">Equity</div>
<div class="dt" style="left:10.7px;">2016.01.14</div>
<div class="dt" style="left:50.2px;">2016.05.17</div>
<div class="dt" style="left:89.8px;">2016.10.24</div>
<div class="dt" style="left:129.3px;">2017.03.15</div>
<div class="dt" style="left:168.9px;">2017.07.20</div>
<div class="dt" style="left:208.4px;">2017.11.22</div>
<div class="dt" style="left:248.0px;">2018.04.06</div>
<div class="dt" style="left:287.5px;">2018.08.30</div>
<div class="dt" style="left:327.1px;">2019.01.24</div>
<div class="dt" style="left:366.6px;">2019.07.10</div>
<div class="dt" style="left:406.2px;">2019.12.23</div>
<div class="dt" style="left:445.7px;">2020.06.15</div>
<div class="dt" style="left:485.3px;">2020.12.02</div>
<div class="dt" style="left:524.9px;">2021.04.29</div>
<div class="dt" style="left:564.4px;">2021.11.05</div>
<div class="dt" style="left:604.0px;">2022.03.21</div>
<div class="ov" style="left:14.5px;top:252.8px;color:#20a84a;transform:scaleX(1.0104);">6 years</div>
<div class="ov" style="left:14.5px;top:275.3px;color:#2b36c8;transform:scaleX(1.0573);">Initial deposit: 100$ (10000 cents)</div>
<div class="ov" style="left:14.5px;top:297.8px;color:#2b36c8;transform:scaleX(1.0408);">Profit:</div>
<div class="ov" style="left:130.5px;top:297.8px;color:#2b36c8;transform:scaleX(1.0729);">18000$ (1800000 cents)</div>
<div class="ov" style="left:14.5px;top:320.3px;color:#2b36c8;transform:scaleX(1.0667);">Maximum drawdown: 39%</div>
<div class="ov" style="left:14.5px;top:342.8px;color:#2b36c8;transform:scaleX(1.0351);">Auto_Lot = true</div>
<div class="ov" style="left:14.5px;top:365.3px;color:#2b36c8;transform:scaleX(0.9740);">Risk = 4</div>
<svg class="abs" style="left:0;top:0;" width="640" height="480" viewBox="0 0 640 480">
<rect x="8.00" y="477.00" width="153.80" height="1.20" fill="#808080"/>
<rect x="193.20" y="477.00" width="443.00" height="1.20" fill="#a2a2a2"/>
<rect x="589.50" y="478.60" width="46.70" height="1.40" fill="#93c765"/>
<rect x="8.00" y="477.00" width="1.00" height="3.00" fill="#6a6a6a"/>
<rect x="50.40" y="477.00" width="1.00" height="3.00" fill="#6a6a6a"/>
<rect x="90.40" y="477.00" width="1.00" height="3.00" fill="#6a6a6a"/>
<rect x="122.40" y="477.00" width="1.00" height="3.00" fill="#6a6a6a"/>
<rect x="161.20" y="477.00" width="1.00" height="3.00" fill="#6a6a6a"/>
<rect x="193.00" y="477.00" width="1.00" height="3.00" fill="#6a6a6a"/>
<rect x="7.00" y="240.60" width="0.80" height="236.40" fill="#cbcbcb"/>
</svg>
</div></body></html>
